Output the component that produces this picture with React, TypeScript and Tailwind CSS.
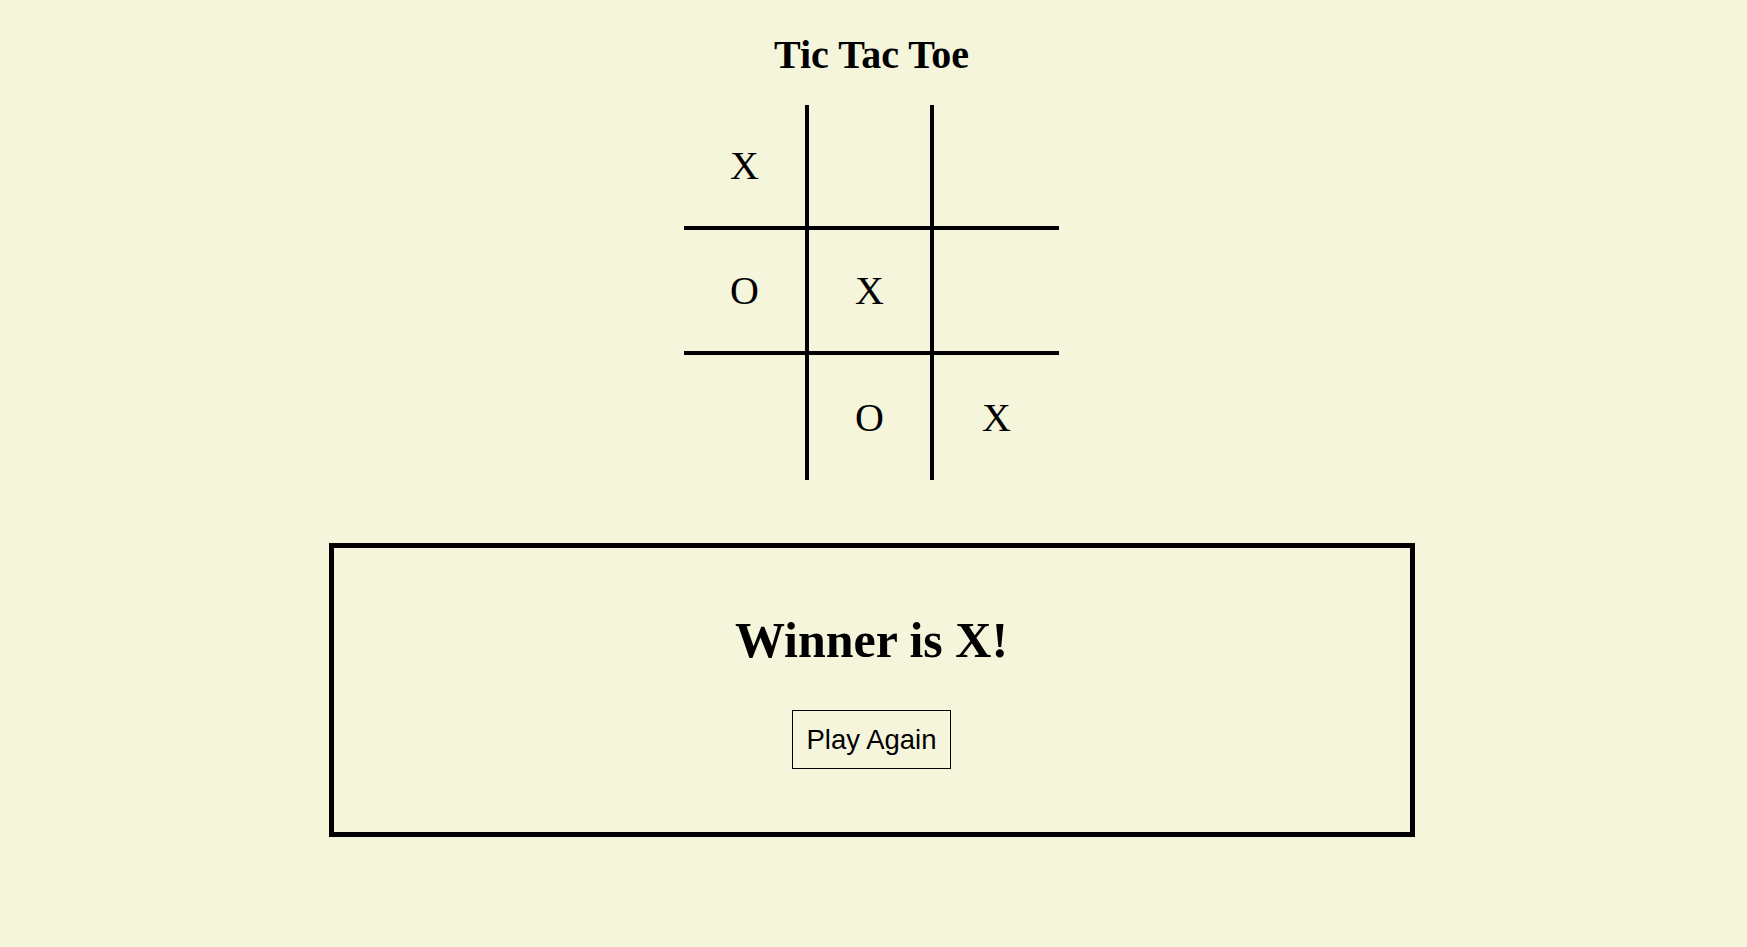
import { useState } from "react";

type Mark = "X" | "O" | null;

const startBoard: Mark[] = ["X", null, null, "O", "X", null, null, "O", "X"];

const lines = [
  [0, 1, 2],
  [3, 4, 5],
  [6, 7, 8],
  [0, 3, 6],
  [1, 4, 7],
  [2, 5, 8],
  [0, 4, 8],
  [2, 4, 6],
];

function findWinner(board: Mark[]): Mark {
  for (const [a, b, c] of lines) {
    if (board[a] && board[a] === board[b] && board[a] === board[c]) {
      return board[a];
    }
  }
  return null;
}

function Cell({
  value,
  index,
  onPick,
}: {
  value: Mark;
  index: number;
  onPick: (index: number) => void;
}) {
  const col = index % 3;
  const row = Math.floor(index / 3);

  return (
    <button
      type="button"
      onClick={() => onPick(index)}
      className={`flex h-[125px] w-[125px] items-center justify-center border-black font-['Liberation_Serif',serif] text-[40px] text-black ${
        col < 2 ? "border-r-4" : ""
      } ${row < 2 ? "border-b-4" : ""}`}
    >
      {value}
    </button>
  );
}

export default function App() {
  const [board, setBoard] = useState<Mark[]>(startBoard);
  const [turn, setTurn] = useState<"X" | "O">("O");
  const winner = findWinner(board);

  function handlePick(index: number) {
    if (winner || board[index]) return;
    const next = board.slice();
    next[index] = turn;
    setBoard(next);
    setTurn(turn === "X" ? "O" : "X");
  }

  function handleReset() {
    setBoard(Array(9).fill(null));
    setTurn("X");
  }

  return (
    <div className="flex min-h-screen w-full flex-col items-center bg-[#f5f5dc] pr-[4px] pt-[33px] font-['Liberation_Serif',serif] text-black">
      <h1 className="text-[40px] font-bold leading-[44px]">Tic Tac Toe</h1>

      <div className="mt-[28px] grid grid-cols-[repeat(3,125px)]">
        {board.map((value, index) => (
          <Cell key={index} value={value} index={index} onPick={handlePick} />
        ))}
      </div>

      {winner && (
        <section className="mt-[63px] flex w-[1086px] flex-col items-center border-[5px] border-black pb-[63px] pt-[65px]">
          <h2 className="text-[50px] font-bold leading-[55px]">
            Winner is {winner}!
          </h2>
          <button
            type="button"
            onClick={handleReset}
            className="mt-[42px] flex h-[59px] items-center border border-black px-[14px] font-['Liberation_Sans',Arial,sans-serif] text-[27.5px] text-black"
          >
            Play Again
          </button>
        </section>
      )}
    </div>
  );
}
